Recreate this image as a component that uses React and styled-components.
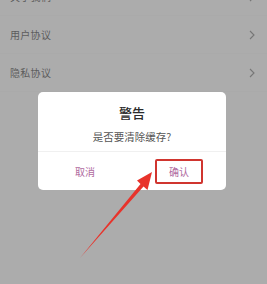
import React from "react";
import styled, { createGlobalStyle } from "styled-components";

const Global = createGlobalStyle`
  html, body { margin: 0; padding: 0; }
  body {
    width: 267px; height: 284px; overflow: hidden;
    background: #acacac;
    font-family: "Noto Sans CJK SC", "Noto Sans", sans-serif;
  }
`;

const Page = styled.div`
  position: relative;
  width: 267px;
  height: 284px;
  overflow: hidden;
  background: #acacac;
`;

const List = styled.div`
  display: flex;
  flex-direction: column;
  margin-top: -22px;
`;

const Row = styled.div`
  height: 38px;
  display: flex;
  align-items: center;
  justify-content: space-between;
  padding: 0 10px 0 10px;
  border-bottom: 1px solid #aaaaaa;
  box-sizing: border-box;
`;

const RowLabel = styled.span`
  font-size: 10px;
  color: #5c5c5c;
  letter-spacing: 0.3px;
`;

const Chevron = styled.svg`
  width: 6px;
  height: 10px;
  margin-right: 2px;
`;

const Dialog = styled.div`
  position: absolute;
  left: 38px;
  top: 92px;
  width: 188px;
  height: 98px;
  background: #ffffff;
  border-radius: 5px;
  display: flex;
  flex-direction: column;
`;

const Body = styled.div`
  height: 60px;
  display: flex;
  flex-direction: column;
  align-items: center;
  border-bottom: 1px solid #f0f0f0;
  box-sizing: border-box;
`;

const Title = styled.div`
  margin-top: 13px;
  font-size: 13px;
  line-height: 16px;
  color: #2b2b2b;
  font-weight: 500;
`;

const Message = styled.div`
  margin-top: 9px;
  font-size: 10.5px;
  line-height: 14px;
  color: #555555;
`;

const Actions = styled.div`
  flex: 1;
  display: grid;
  grid-template-columns: 1fr 1fr;
  align-items: center;
  justify-items: center;
`;

const Action = styled.div`
  font-size: 10px;
  color: #b06aa0;
  width: 48px;
  height: 25px;
  box-sizing: border-box;
  display: flex;
  align-items: center;
  justify-content: center;
  margin-top: 1px;
  border: 2px solid ${(p) => (p.$highlight ? "#d0352f" : "transparent")};
  border-radius: 2px;
`;

const Arrow = styled.svg`
  position: absolute;
  left: 0;
  top: 0;
  width: 267px;
  height: 284px;
  pointer-events: none;
`;

const ChevronIcon = () => (
  <Chevron viewBox="0 0 6 10">
    <path d="M1 1 L5 5 L1 9" fill="none" stroke="#767676" strokeWidth="1.1" />
  </Chevron>
);

export default function App() {
  return (
    <>
      <Global />
      <Page>
        <List>
          <Row>
            <RowLabel>关于我们</RowLabel>
            <ChevronIcon />
          </Row>
          <Row>
            <RowLabel>用户协议</RowLabel>
            <ChevronIcon />
          </Row>
          <Row>
            <RowLabel>隐私协议</RowLabel>
            <ChevronIcon />
          </Row>
        </List>
        <Dialog>
          <Body>
            <Title>警告</Title>
            <Message>是否要清除缓存?</Message>
          </Body>
          <Actions>
            <Action>取消</Action>
            <Action $highlight>确认</Action>
          </Actions>
        </Dialog>
        <Arrow viewBox="0 0 267 284">
          <polygon
            points="152,172 147.5,190 143.5,186.5 80,258 140.5,184 137,180.5"
            fill="#e8332b"
          />
        </Arrow>
      </Page>
    </>
  );
}
